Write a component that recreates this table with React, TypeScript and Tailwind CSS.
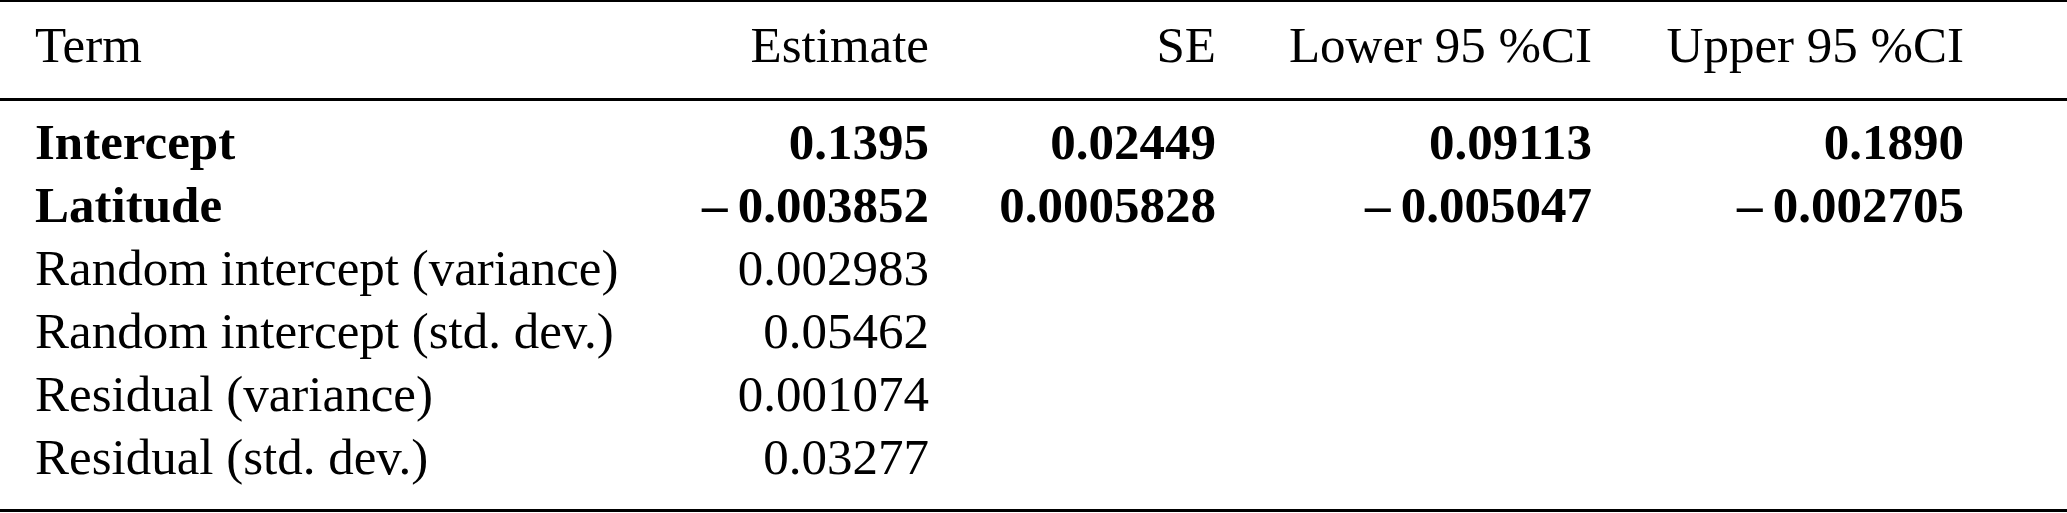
import React from "react";

type Row = { term: string; est: string; se?: string; lo?: string; hi?: string; bold?: boolean };

const rows: Row[] = [
  { term: "Intercept", est: "0.1395", se: "0.02449", lo: "0.09113", hi: "0.1890", bold: true },
  { term: "Latitude", est: "–\u20090.003852", se: "0.0005828", lo: "–\u20090.005047", hi: "–\u20090.002705", bold: true },
  { term: "Random intercept (variance)", est: "0.002983" },
  { term: "Random intercept (std. dev.)", est: "0.05462" },
  { term: "Residual (variance)", est: "0.001074" },
  { term: "Residual (std. dev.)", est: "0.03277" },
];

const grid = "grid grid-cols-[665px_229px_287px_376px_372px] pl-[35px]";

export default function App() {
  return (
    <div className="w-[2067px] h-[513px] bg-white text-black font-['Liberation_Serif',_'Times_New_Roman',_serif] text-[51px] leading-[63px]">
      <div className="h-[2px] bg-black" />
      <div className={`${grid} pt-[12px] pb-[21px]`}>
        <div>Term</div>
        <div className="text-right">Estimate</div>
        <div className="text-right">SE</div>
        <div className="text-right whitespace-nowrap">Lower 95 %CI</div>
        <div className="text-right whitespace-nowrap">Upper 95 %CI</div>
      </div>
      <div className="h-[3px] bg-black" />
      <div className="pt-[10px] pb-[20px]">
        {rows.map((r) => (
          <div key={r.term} className={`${grid} whitespace-nowrap ${r.bold ? "font-bold" : "font-normal"}`}>
            <div>{r.term}</div>
            <div className="text-right">{r.est}</div>
            <div className="text-right">{r.se ?? ""}</div>
            <div className="text-right">{r.lo ?? ""}</div>
            <div className="text-right">{r.hi ?? ""}</div>
          </div>
        ))}
      </div>
      <div className="h-[3px] bg-black" />
    </div>
  );
}
